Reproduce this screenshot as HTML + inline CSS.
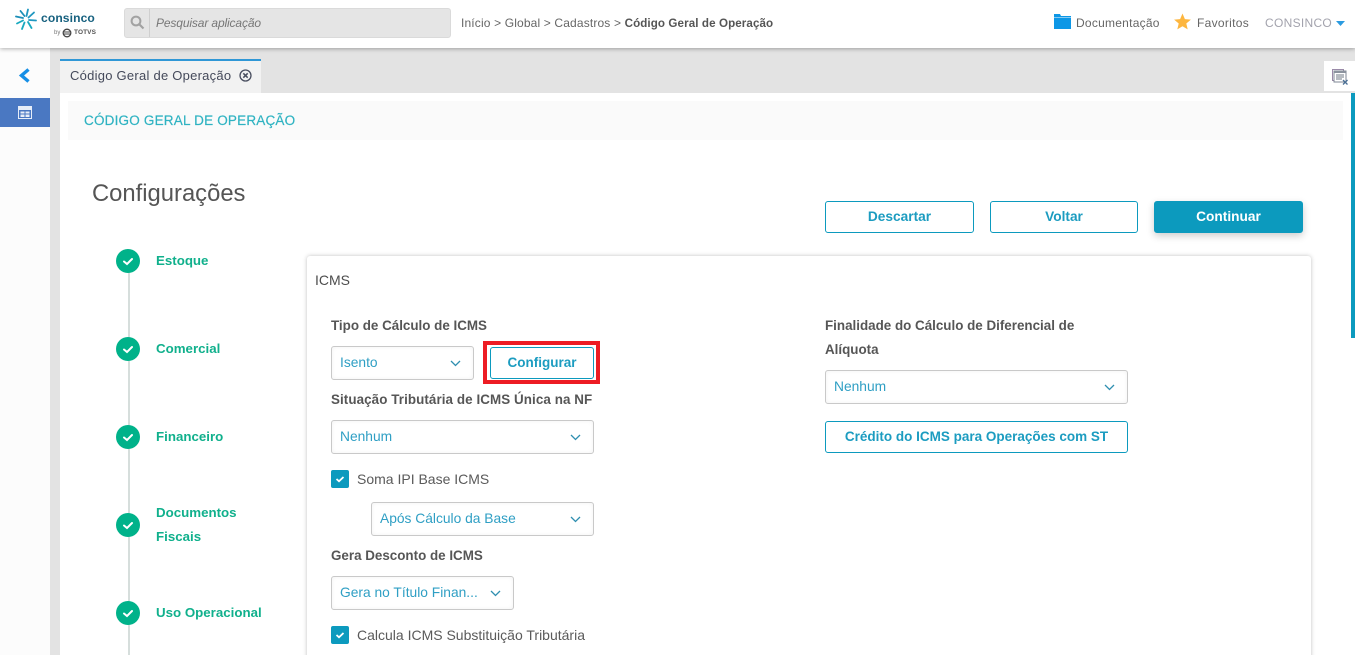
<!DOCTYPE html>
<html lang="pt-BR"><head><meta charset="utf-8"><title>Código Geral de Operação</title>
<style>
*{box-sizing:border-box}
html,body{margin:0;padding:0;width:1355px;height:655px;overflow:hidden;background:#fff;font-family:"Liberation Sans",sans-serif}
#w{position:relative;width:1355px;height:655px;overflow:hidden}
.a{position:absolute}
.t{position:absolute;white-space:nowrap;line-height:16px;font-size:13.5px;color:#5a5a5a}
.lb{font-weight:bold;color:#565656;font-size:13.4px}
.st{font-weight:bold;color:#10b08c;font-size:13.3px}
.sel{position:absolute;height:34px;border:1px solid #c9c9c9;border-radius:3px;background:#fff;box-shadow:inset 0 0 4px rgba(0,0,0,.06);color:#2f9fc4;font-size:13.8px;line-height:32px;padding-left:8px;white-space:nowrap}
.sel svg{position:absolute;right:12px;top:13px}
.btn{position:absolute;height:32px;border:1px solid #0c9abe;border-radius:3px;background:#fff;color:#1c9cc0;font-weight:bold;font-size:13.7px;line-height:29px;text-align:center;white-space:nowrap}
.ck{position:absolute;width:18px;height:18px;background:#0c9abe;border-radius:2px}
.dot{position:absolute;left:116px;width:24px;height:24px;border-radius:50%;background:#00b28a}
</style></head><body><div id="w">
<div class="a" style="left:0;top:0;width:50px;height:655px;background:#fcfcfc"></div>
<div class="a" style="left:50px;top:48px;width:10px;height:607px;background:#e3e3e3"></div>
<div class="a" style="left:60px;top:48px;width:1295px;height:45px;background:#e3e3e3"></div>
<div class="a" style="left:0;top:0;width:1355px;height:48px;background:#fff;box-shadow:0 1px 4px rgba(0,0,0,.3)"></div>

<svg class="a" style="left:15px;top:8px" width="22" height="22" viewBox="0 0 22 22"><g stroke-width="1.800" stroke-linecap="round"><path d="M11.500 8L13 1.500M13.500 9.500L19 4.500M14 12l7 .5" stroke="#1f97c0"/><path d="M13 14l3.500 6M9.500 14.500L7 21M8 12.500l-6 3" stroke="#19a9bf"/><path d="M8 10L1 8.500M9.500 8L5.500 3" stroke="#1b8fb8"/></g></svg>
<div class="t" style="left:41px;top:10px;font-size:12.100px;font-weight:bold;color:#17617f;letter-spacing:.1px">consinco</div>
<div class="t" style="left:54px;top:25px;font-size:6px;color:#777">by</div>
<svg class="a" style="left:62px;top:28px" width="10" height="10" viewBox="0 0 10 10"><circle cx="5" cy="5" r="3.800" fill="none" stroke="#444" stroke-width="1.300"/><path d="M2 4h6M2 6h6" stroke="#444"/></svg>
<div class="t" style="left:74px;top:25px;font-size:6.500px;font-weight:bold;color:#555;letter-spacing:.1px">TOTVS</div>

<div class="a" style="left:124px;top:8px;width:327px;height:30px;background:#e5e5e5;border:1px solid #dadada;border-radius:3px"></div>
<div class="a" style="left:149px;top:9px;width:1px;height:28px;background:#cfcfcf"></div>
<svg class="a" style="left:130px;top:15px" width="15" height="15" viewBox="0 0 15 15"><circle cx="6" cy="6" r="4.400" fill="none" stroke="#a2a2a2" stroke-width="2"/><path d="M9.500 9.500L13.500 13.500" stroke="#a2a2a2" stroke-width="2.200"/></svg>
<div class="t" style="left:156px;top:15px;font-style:italic;font-size:12px;color:#777;letter-spacing:-.13px">Pesquisar aplicação</div>
<div class="t" style="left:461px;top:15px;font-size:12px;color:#666;letter-spacing:.15px">Início &gt; Global &gt; Cadastros &gt; <b style="color:#555;font-size:11.600px;letter-spacing:.1px">Código Geral de Operação</b></div>

<svg class="a" style="left:1054px;top:14px" width="17" height="15" viewBox="0 0 17 15"><path d="M0 0h6l1 2h10v13H0z" fill="#0d97e6"/><path d="M0 3.500h17" stroke="#fff" stroke-width=".6"/></svg>
<div class="t" style="left:1076px;top:15px;font-size:12px;color:#666;letter-spacing:.25px">Documentação</div>
<svg class="a" style="left:1174px;top:13px" width="17" height="17" viewBox="0 0 17 17"><path d="M8.500 0.500l2.400 5.600 6 .5-4.600 3.900 1.400 5.900-5.200-3.200-5.200 3.200 1.400-5.900L.1 6.600l6-.5z" fill="#fdb63f"/></svg>
<div class="t" style="left:1197px;top:15px;font-size:12px;color:#666;letter-spacing:.3px">Favoritos</div>
<div class="t" style="left:1265px;top:15px;font-size:12px;color:#a3a3ad;letter-spacing:.3px">CONSINCO</div>
<svg class="a" style="left:1336px;top:21px" width="9" height="5" viewBox="0 0 9 5"><path d="M0 0h9L4.500 5z" fill="#2b9be0"/></svg>

<svg class="a" style="left:18px;top:68px" width="14" height="15" viewBox="0 0 14 15"><path d="M10.500 1.500L3.500 7.500l7 6" fill="none" stroke="#168fe6" stroke-width="3.400"/></svg>
<div class="a" style="left:0;top:98px;width:50px;height:29px;background:#4a78c2"></div>
<svg class="a" style="left:18px;top:106px" width="14" height="13" viewBox="0 0 14 13"><rect x=".5" y=".5" width="13" height="12" fill="none" stroke="#e6edf8"/><path d="M1 1h12v3H1z" fill="#e6edf8"/><path d="M2.500 5.500h4v2h-4zM7.500 5.500h4v2h-4zM2.500 8.500h4v2.500h-4zM7.500 8.500h4v2.500h-4z" fill="#e6edf8"/></svg>

<div class="a" style="left:60px;top:59px;width:201px;height:34px;background:#f2f2f2;border-top:2px solid #2f97d6"></div>
<div class="t" style="left:70px;top:68px;font-size:13px;color:#44495a;letter-spacing:.25px">Código Geral de Operação</div>
<svg class="a" style="left:239px;top:69px" width="13" height="13" viewBox="0 0 13 13"><circle cx="6.500" cy="6.500" r="5.500" fill="none" stroke="#4a4f60" stroke-width="1.300"/><path d="M4.300 4.300l4.400 4.400M8.700 4.300l-4.400 4.400" stroke="#4a4f60" stroke-width="1.500"/></svg>

<div class="a" style="left:1324px;top:61px;width:31px;height:30px;background:#fff"></div>
<svg class="a" style="left:1332px;top:69px" width="17" height="16" viewBox="0 0 17 16"><rect x=".5" y=".5" width="11" height="11" fill="#fff" stroke="#9a8aa8"/><rect x="2" y="2" width="12" height="11" fill="#fff" stroke="#7f8794"/><path d="M2 2h12v2H2z" fill="#8b939e"/><path d="M4 6h8M4 8h8M4 10h6" stroke="#6f7986"/><path d="M11 11l4.500 4.500M15.500 11L11 15.500" stroke="#4a6f95" stroke-width="1.300"/></svg>

<div class="a" style="left:60px;top:93px;width:1295px;height:562px;background:#fff"></div>
<div class="a" style="left:1351px;top:93px;width:4px;height:245px;background:#0c9abe"></div>
<div class="a" style="left:68px;top:101px;width:1275px;height:39px;background:#fafafa"></div>
<div class="t" style="left:84px;top:112px;font-size:13.500px;line-height:17px;color:#2fb3c2;letter-spacing:.2px;-webkit-text-stroke:.2px #2fb3c2">CÓDIGO GERAL DE OPERAÇÃO</div>

<div class="t" style="left:92px;top:181px;line-height:26px;font-size:23.800px;color:#555">Configurações</div>

<div class="btn" style="left:825px;top:201px;width:149px">Descartar</div>
<div class="btn" style="left:990px;top:201px;width:148px">Voltar</div>
<div class="btn" style="left:1154px;top:201px;width:149px;background:#0c9abe;color:#fff;box-shadow:0 3px 8px rgba(0,0,0,.2)">Continuar</div>

<div class="a" style="left:128px;top:260px;width:2px;height:395px;background:#d6dedc"></div>
<div class="dot" style="top:249px"></div><div class="dot" style="top:337px"></div><div class="dot" style="top:425px"></div><div class="dot" style="top:513px"></div><div class="dot" style="top:601px"></div>
<svg class="a" style="left:116px;top:0" width="24" height="655" viewBox="0 0 24 655"><g fill="none" stroke="#fff" stroke-width="2" stroke-linecap="round"><path d="M8 261.500l3 2.500 5-5"/><path d="M8 349.500l3 2.500 5-5"/><path d="M8 437.500l3 2.500 5-5"/><path d="M8 525.500l3 2.500 5-5"/><path d="M8 613.500l3 2.500 5-5"/></g></svg>
<div class="t st" style="left:156px;top:253px">Estoque</div>
<div class="t st" style="left:156px;top:341px">Comercial</div>
<div class="t st" style="left:156px;top:429px">Financeiro</div>
<div class="t st" style="left:156px;top:505px">Documentos</div>
<div class="t st" style="left:156px;top:529px">Fiscais</div>
<div class="t st" style="left:156px;top:605px">Uso Operacional</div>

<div class="a" style="left:307px;top:256px;width:1004px;height:420px;background:#fff;border-radius:3px;box-shadow:0 0 4px rgba(0,0,0,.25)"></div>
<div class="t" style="left:315px;top:272px;font-size:14px;color:#4d4d4d">ICMS</div>

<div class="t lb" style="left:331px;top:318px">Tipo de Cálculo de ICMS</div>
<div class="sel" style="left:331px;top:346px;width:143px">Isento<svg width="11" height="7" viewBox="0 0 11 7"><path d="M1 1l4.500 4.500L10 1" fill="none" stroke="#2f8fb0" stroke-width="1.300"/></svg></div>
<div class="a" style="left:483px;top:341px;width:117px;height:43px;border:4px solid #ed1c24"></div>
<div class="btn" style="left:490px;top:347px;width:104px;height:32px;font-size:13.500px">Configurar</div>

<div class="t lb" style="left:331px;top:392px;letter-spacing:.08px">Situação Tributária de ICMS Única na NF</div>
<div class="sel" style="left:331px;top:420px;width:263px">Nenhum<svg width="11" height="7" viewBox="0 0 11 7"><path d="M1 1l4.500 4.500L10 1" fill="none" stroke="#2f8fb0" stroke-width="1.300"/></svg></div>

<div class="ck" style="left:331px;top:470px"></div>
<svg class="a" style="left:331px;top:470px" width="18" height="18" viewBox="0 0 18 18"><path d="M5.500 9l2.500 2.300 4.500-4.300" fill="none" stroke="#fff" stroke-width="1.800"/></svg>
<div class="t" style="left:357px;top:471px;font-size:14px">Soma IPI Base ICMS</div>

<div class="sel" style="left:371px;top:502px;width:223px">Após Cálculo da Base<svg width="11" height="7" viewBox="0 0 11 7"><path d="M1 1l4.500 4.500L10 1" fill="none" stroke="#2f8fb0" stroke-width="1.300"/></svg></div>

<div class="t lb" style="left:331px;top:548px">Gera Desconto de ICMS</div>
<div class="sel" style="left:331px;top:576px;width:183px">Gera no Título Finan...<svg width="11" height="7" viewBox="0 0 11 7"><path d="M1 1l4.500 4.500L10 1" fill="none" stroke="#2f8fb0" stroke-width="1.300"/></svg></div>

<div class="ck" style="left:331px;top:626px"></div>
<svg class="a" style="left:331px;top:626px" width="18" height="18" viewBox="0 0 18 18"><path d="M5.500 9l2.500 2.300 4.500-4.300" fill="none" stroke="#fff" stroke-width="1.800"/></svg>
<div class="t" style="left:357px;top:627px;font-size:14px">Calcula ICMS Substituição Tributária</div>

<div class="t lb" style="left:825px;top:318px">Finalidade do Cálculo de Diferencial de</div>
<div class="t lb" style="left:825px;top:342px">Alíquota</div>
<div class="sel" style="left:825px;top:370px;width:303px">Nenhum<svg width="11" height="7" viewBox="0 0 11 7"><path d="M1 1l4.500 4.500L10 1" fill="none" stroke="#2f8fb0" stroke-width="1.300"/></svg></div>
<div class="btn" style="left:825px;top:421px;width:303px;font-size:13.500px">Crédito do ICMS para Operações com ST</div>
</div></body></html>
